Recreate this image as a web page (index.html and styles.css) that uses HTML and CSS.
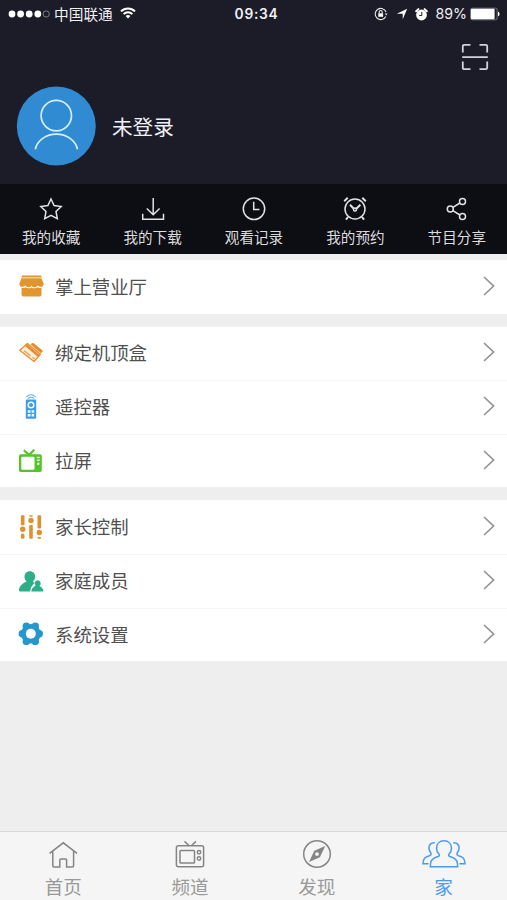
FILE: index.html
```
<!DOCTYPE html>
<html lang="zh-CN">
<head>
<meta charset="utf-8">
<title>家</title>
<link rel="stylesheet" href="styles.css">
</head>
<body>
<div class="app">
  <header class="header">
    <div class="status">
      <div class="status-left">
        <svg width="42" height="10" viewBox="0 0 42 10"><g fill="#fff"><circle cx="4" cy="5" r="3.4"/><circle cx="12.6" cy="5" r="3.4"/><circle cx="21.2" cy="5" r="3.4"/><circle cx="29.8" cy="5" r="3.4"/></g><circle cx="38.2" cy="5" r="3.1" fill="none" stroke="#96959e" stroke-width=".8"/></svg>
        <span class="carrier">中国联通</span>
        <svg class="wifi" width="16" height="12" viewBox="0 0 16 12" fill="none" stroke="#fff" stroke-width="2"><path d="M1 4.4C5 .4 11 .4 15 4.4M3.6 7.1c2.5-2.5 6.3-2.5 8.800 0"/><path d="M8 11.600 5.600 9.100a3.600 3.600 0 0 1 4.800 0z" fill="#fff" stroke="none"/></svg>
      </div>
      <span class="time">09:34</span>
      <div class="status-right">
        <svg width="14" height="14" viewBox="0 0 14 14" fill="none" stroke="#e8e8ed" stroke-width="1.1"><path d="M11.800 9.500A5.600 5.600 0 1 1 12 5"/><path d="m10.800 6.600 1.500 2 1.300-2z" fill="#e8e8ed" stroke="none"/><path d="M4.300 6.300h4.800v3.500H4.300z" fill="#fff" stroke="none"/><path d="M5.200 6.500V5a1.500 1.500 0 0 1 3 0v1.500"/></svg>
        <svg class="arrow" width="12" height="12" viewBox="0 0 12 12"><path d="M11.200.8 6.700 11.200V5.700H.8z" fill="#fff"/></svg>
        <svg class="alarm" width="13" height="13" viewBox="0 0 13 13"><circle cx="6.500" cy="7" r="5.400" fill="#fff"/><path d="m1.200 3.300 2.200-2.200M11.800 3.300 9.600 1.100" stroke="#fff" stroke-width="2" stroke-linecap="round"/><path d="M6.800 4v3.500H4.300" fill="none" stroke="#1c1b28" stroke-width="1"/></svg>
        <span class="percent">89%</span>
        <svg class="battery" width="30" height="14" viewBox="0 0 30 14"><rect x=".5" y="1.200" width="26.700" height="11.600" rx="1.800" fill="none" stroke="#8c8b94" stroke-width=".8"/><rect x="1" y="1.800" width="23.600" height="10.400" rx="1" fill="#fff"/><path d="M28 4.700c2 .5 2 4 0 4.500z" fill="#fff"/></svg>
      </div>
    </div>
    <div class="tools">
      <svg width="28" height="28" viewBox="0 0 28 28" fill="none" stroke="#d2d2dc" stroke-width="1.800"><path d="M1.800 9.500V3.300q0-1.500 1.500-1.500h6.200M18.500 1.800h6.200q1.500 0 1.500 1.500v6.200M26.200 18.500v6.200q0 1.500-1.500 1.500h-6.200M9.500 26.200H3.300q-1.500 0-1.500-1.500v-6.200M1.200 14.200h25.600"/></svg>
    </div>
    <div class="profile">
      <svg width="80" height="80" viewBox="0 0 80 80"><circle cx="40.300" cy="40" r="39.500" fill="#308bd3"/><g fill="none" stroke="#d4eeff" stroke-width="1.700"><circle cx="40.300" cy="29.600" r="15.200"/><path d="M19.300 63.200a21.500 18.600 0 0 1 42.200 0"/></g></svg>
      <span class="name">未登录</span>
    </div>
  </header>

  <nav class="quick">
    <a class="quick-item"><svg viewBox="0 0 26 26"><path d="m13 3 3.100 6.500 7.100 1-5.200 5 1.300 7.200L13 19.300l-6.300 3.400L8 15.500l-5.200-5 7.100-1z"/></svg><span>我的收藏</span></a>
    <a class="quick-item"><svg viewBox="0 0 26 26"><path d="M13.200 2v16M6.800 12.500l6.400 6.200 6.400-6.200M2.700 17.700v5.500h20.800v-5.500"/></svg><span>我的下载</span></a>
    <a class="quick-item"><svg viewBox="0 0 26 26"><circle cx="13" cy="12.800" r="10.700"/><path d="M12.700 5.800v7.600h5.800"/></svg><span>观看记录</span></a>
    <a class="quick-item"><svg viewBox="0 0 26 26"><circle cx="13" cy="13" r="10"/><path d="M2.200 5.200 5.700 1.800M20.300 1.800 23.800 5.200M6 21l-2 2.600M20 21l2 2.600M8 8.800l4 4.200M18.400 8.800 14 13" stroke-width="2"/><circle cx="13" cy="13.500" r="1.500"/></svg><span>我的预约</span></a>
    <a class="quick-item"><svg viewBox="0 0 26 26"><circle cx="6.300" cy="13" r="3"/><circle cx="18.500" cy="5.400" r="3"/><circle cx="18.500" cy="20.600" r="3"/><path d="m8.900 11.400 7-4.400M8.900 14.600l7 4.400"/></svg><span>节目分享</span></a>
  </nav>

  <main class="menu">
    <section class="group">
      <a class="row"><svg class="icon" viewBox="0 0 26 26" fill="#e2952e"><path d="M4.500 2.500h18a1 1 0 0 1 1 1v1h-20v-1q0-1 1-1M3.500 5.300h20l2.200 5.400q-.3 3.100-3.100 3.100-1.800 0-2.900-1.300-1.100 1.800-3.100 1.800-2.100 0-3.100-1.600-1 1.600-3.100 1.600-2 0-3.100-1.800-1.100 1.300-2.900 1.300-2.900 0-3.100-3.100z"/><path d="M3.500 15q2.400.4 3.900-.8 3 2.200 6.100.2 3 2 6.100-.2 1.500 1.200 3.900.8v6.500q0 2-2 2h-16q-2 0-2-2z"/></svg><span>掌上营业厅</span><svg class="chevron" viewBox="0 0 12 20"><path d="m1 1 9.600 9L1 19"/></svg></a>
    </section>
    <section class="group">
      <a class="row"><svg class="icon" viewBox="0 0 26 26"><path d="m12.300 4.300 2.800-1.600 10 8.200-2.200 2.400z" fill="#e98b2b"/><path d="m11.500 5.800 11 8.700" stroke="#f7c48f" stroke-width="1.200"/><path d="m1.700 10.200 7.700-6.700 13 10.800-6.400 7.200z" fill="#fff0dc" stroke="#e98b2b" stroke-width="1.300" stroke-linejoin="round"/><path d="m8 5 12.800 11" stroke="#e98b2b" stroke-width="2.600"/><path d="m6 10.500 6.500 5.300M14.500 17.200l2 1.700" stroke="#eda45e" stroke-width="1.500"/></svg><span>绑定机顶盒</span><svg class="chevron" viewBox="0 0 12 20"><path d="m1 1 9.600 9L1 19"/></svg></a>
      <a class="row"><svg class="icon" viewBox="0 0 26 26"><rect x="7.800" y="5.500" width="10.400" height="19.300" rx="1.200" fill="#3b9bf0"/><path d="M8.300 2.800q4.700-4 9.400 0M9.800 4.500q3.200-2.600 6.400 0" fill="none" stroke="#62aff3" stroke-width="1.100"/><circle cx="13" cy="11" r="2.800" fill="#3b9bf0" stroke="#fff" stroke-width="1.400"/><path d="M9.800 16.300h2.600v2.400H9.800zM13.600 16.300h2.600v2.400h-2.600zM9.800 20h2.600v2.400H9.800zM13.600 20h2.600v2.400h-2.600z" fill="#fff"/></svg><span>遥控器</span><svg class="chevron" viewBox="0 0 12 20"><path d="m1 1 9.600 9L1 19"/></svg></a>
      <a class="row"><svg class="icon" viewBox="0 0 26 26"><path d="m5.800 2.200 5.300 4.700L16.300 1.700" fill="none" stroke="#55c42b" stroke-width="2.200"/><rect x="1" y="6.200" width="22.800" height="17.800" rx="1.800" fill="#55c42b"/><rect x="3.300" y="8.700" width="13.200" height="13" rx="1" fill="#fff"/><path d="M18.800 9.500h3M18.800 12.300h3" stroke="#d9f4cf" stroke-width="1.500"/><circle cx="20.300" cy="15.700" r="1.200" fill="#fff"/></svg><span>拉屏</span><svg class="chevron" viewBox="0 0 12 20"><path d="m1 1 9.600 9L1 19"/></svg></a>
    </section>
    <section class="group">
      <a class="row"><svg class="icon" viewBox="0 0 26 26" fill="#df9130"><rect x="2.900" y="1.300" width="3.600" height="10" rx="1"/><circle cx="4.700" cy="15.300" r="2.700"/><rect x="2.900" y="19.500" width="3.600" height="5.200" rx="1.500"/><rect x="11.200" y="1.300" width="3.600" height="1.500" rx=".7"/><circle cx="13" cy="6.500" r="2.700"/><rect x="11.200" y="11" width="3.600" height="13.700" rx="1"/><rect x="19.500" y="1.300" width="3.600" height="13.200" rx="1"/><circle cx="21.300" cy="18.500" r="2.700"/><rect x="19.500" y="23" width="3.600" height="1.700" rx=".8"/></svg><span>家长控制</span><svg class="chevron" viewBox="0 0 12 20"><path d="m1 1 9.600 9L1 19"/></svg></a>
      <a class="row"><svg class="icon" viewBox="0 0 26 26" fill="#2caf88"><path d="M11.800 3.200c3.200 0 5.500 2.300 5.300 5.500-.1 2.200-.9 3.500-2.200 4.800l1.400 1.700c-2.300 2.200-3.800 4.500-4.200 8.300H2.300q-1.500 0-1.300-1.600c.4-4 3.400-6.500 7.600-8.400-1.300-1.300-2.100-2.600-2.100-4.800 0-3.200 2.200-5.500 5.300-5.500"/><path d="M19.500 12.200a3.200 3.200 0 0 1 2 5.700c2.200 1 3.500 2.500 3.900 4.700q.1.900-.9.900H13.300c.2-2.800 1.700-4.700 4.300-5.800a3.200 3.200 0 0 1 1.900-5.500"/></svg><span>家庭成员</span><svg class="chevron" viewBox="0 0 12 20"><path d="m1 1 9.600 9L1 19"/></svg></a>
      <a class="row"><svg class="icon" viewBox="0 0 26 26"><g fill="#2597cf"><circle cx="12.800" cy="12.800" r="9.800"/><circle cx="4.300" cy="12.800" r="3.700"/><circle cx="21.300" cy="12.800" r="3.700"/><circle cx="8.300" cy="5.200" r="3.700"/><circle cx="17.300" cy="5.200" r="3.700"/><circle cx="8.300" cy="20.400" r="3.700"/><circle cx="17.300" cy="20.400" r="3.700"/></g><circle cx="12.800" cy="12.800" r="5" fill="#fff"/></svg><span>系统设置</span><svg class="chevron" viewBox="0 0 12 20"><path d="m1 1 9.600 9L1 19"/></svg></a>
    </section>
  </main>

  <nav class="tabs">
    <a class="tab"><svg viewBox="0 0 44 32"><path d="m8.600 14.300 13.700-10.500 13.700 10.500M11.800 12v14.700q0 1.200 1.200 1.200h5.800v-7q0-1 1-1h4.800q1 0 1 1v7h5.800q1.200 0 1.200-1.200V12"/></svg><span>首页</span></a>
    <a class="tab"><svg viewBox="0 0 44 32"><rect x="8.400" y="6.800" width="27.200" height="21" rx="2"/><rect x="12" y="11.500" width="14.500" height="12.500" rx=".8"/><path d="m16.500 2.400 4.700 4.400M28 2.400l-4.700 4.400"/><circle cx="31" cy="13.300" r="1.700"/><circle cx="31" cy="19.500" r="1.700"/></svg><span>频道</span></a>
    <a class="tab"><svg viewBox="0 0 44 32"><circle cx="22" cy="15" r="13.300"/><path d="m30.200 7-5.300 11.200L14 23l5.300-11.200z" fill="#858585" stroke="none"/><circle cx="22" cy="15.100" r="1.900" fill="#f5f5f5" stroke="none"/></svg><span>发现</span></a>
    <a class="tab active"><svg viewBox="0 0 44 32"><path d="M22 1.800c4.600 0 7.500 3.200 7.500 7.500 0 2.700-1.200 4.600-2.600 6q-.8 1.500 1 2.200c4.500 1.400 7.200 3 7.400 6.200l.4 4H8.300l.4-4c.2-3.200 2.900-4.800 7.400-6.200q1.800-.7 1-2.200c-1.400-1.400-2.600-3.300-2.600-6 0-4.300 2.900-7.500 7.500-7.500zM12.800 3.800C8.900 3.500 6.800 6 6.900 9c0 2.200.8 3.500 2 5q.7 2-1.400 2.700C2.800 18 1.200 19.500 1 24.800h5.600M31.200 3.800c3.900-.3 6 2.200 5.900 5.200 0 2.200-.8 3.500-2 5q-.7 2 1.400 2.700c4.700 1.300 6.300 2.800 6.500 8.100h-5.600"/></svg><span>家</span></a>
  </nav>
</div>
</body>
</html>
```
FILE: styles.css
```
* { box-sizing: border-box; }
body {
  margin: 0;
  font-family: "Liberation Sans", "Noto Sans CJK SC", sans-serif;
  background: #eee;
}
svg { display: block; flex: none; }
.app {
  height: 900px;
  display: flex;
  flex-direction: column;
  overflow: hidden;
}
.header {
  height: 184px;
  flex: none;
  background: #1c1b28;
  color: #f0f0f5;
}
.status {
  height: 28px;
  padding: 0 7px 0 8px;
  display: grid;
  grid-template-columns: 1fr auto 1fr;
  align-items: center;
}
.status-left, .status-right { display: flex; align-items: center; }
.status-right { justify-content: flex-end; }
.carrier { margin: 1px 0 0 4px; font-size: 14.7px; line-height: 20px; }
.wifi { margin: -2px 0 0 7px; }
.time {
  margin-left: 5px;
  font: 600 13.8px/20px Inter, sans-serif;
  letter-spacing: .7px;
}
.arrow { margin-left: 8px; }
.alarm { margin-left: 7px; }
.percent {
  margin-left: 7px;
  font: 400 14.2px/20px Inter, sans-serif;
}
.battery { margin: -1px 0 0 3px; }
.tools {
  display: flex;
  justify-content: flex-end;
  padding: 15px 18px 0 0;
}
.profile {
  display: flex;
  align-items: center;
  gap: 16px;
  padding: 15px 0 0 16px;
}
.name { margin-top: 3px; font-size: 20.6px; line-height: 30px; }
.quick {
  height: 70px;
  flex: none;
  display: grid;
  grid-template-columns: repeat(5, 1fr);
  background: #0d0d14;
  color: #dcdcde;
}
.quick-item {
  display: flex;
  flex-direction: column;
  align-items: center;
  padding: 12px 0 0 1px;
  font-size: 14.6px;
  line-height: 20px;
  gap: 6px;
}
.quick svg {
  width: 26px;
  height: 26px;
  fill: none;
  stroke: #e2e2e4;
  stroke-width: 1.5;
}
.menu {
  flex: 1;
  padding-top: 6px;
  display: flex;
  flex-direction: column;
  gap: 13px;
}
.group { background: #fff; }
.row {
  height: 53.6px;
  padding: 0 12.5px 1px 18px;
  display: flex;
  align-items: center;
  color: #505050;
  font-size: 18.4px;
  line-height: 28px;
}
.row + .row { border-top: 1px solid #f5f5f5; }
.row span { flex: 1; margin: 3px 0 0 11px; }
.icon { width: 26px; height: 26px; }
.chevron {
  width: 12px;
  height: 20px;
  margin-top: -1px;
  fill: none;
  stroke: #909090;
  stroke-width: 1.6;
}
.tabs {
  height: 69px;
  flex: none;
  display: grid;
  grid-template-columns: repeat(4, 1fr);
  background: #f5f5f5;
  border-top: 1px solid #d8d8d8;
}
.tab {
  display: flex;
  flex-direction: column;
  align-items: center;
  padding-top: 7px;
  color: #999;
  font-size: 18.6px;
  line-height: 28px;
}
.tab svg {
  width: 44px;
  height: 32px;
  fill: none;
  stroke: #858585;
  stroke-width: 1.5;
}
.tab span { margin-top: 3px; }
.tab.active { color: #4a9bee; }
.tab.active svg { stroke: #4a9bee; }
```
